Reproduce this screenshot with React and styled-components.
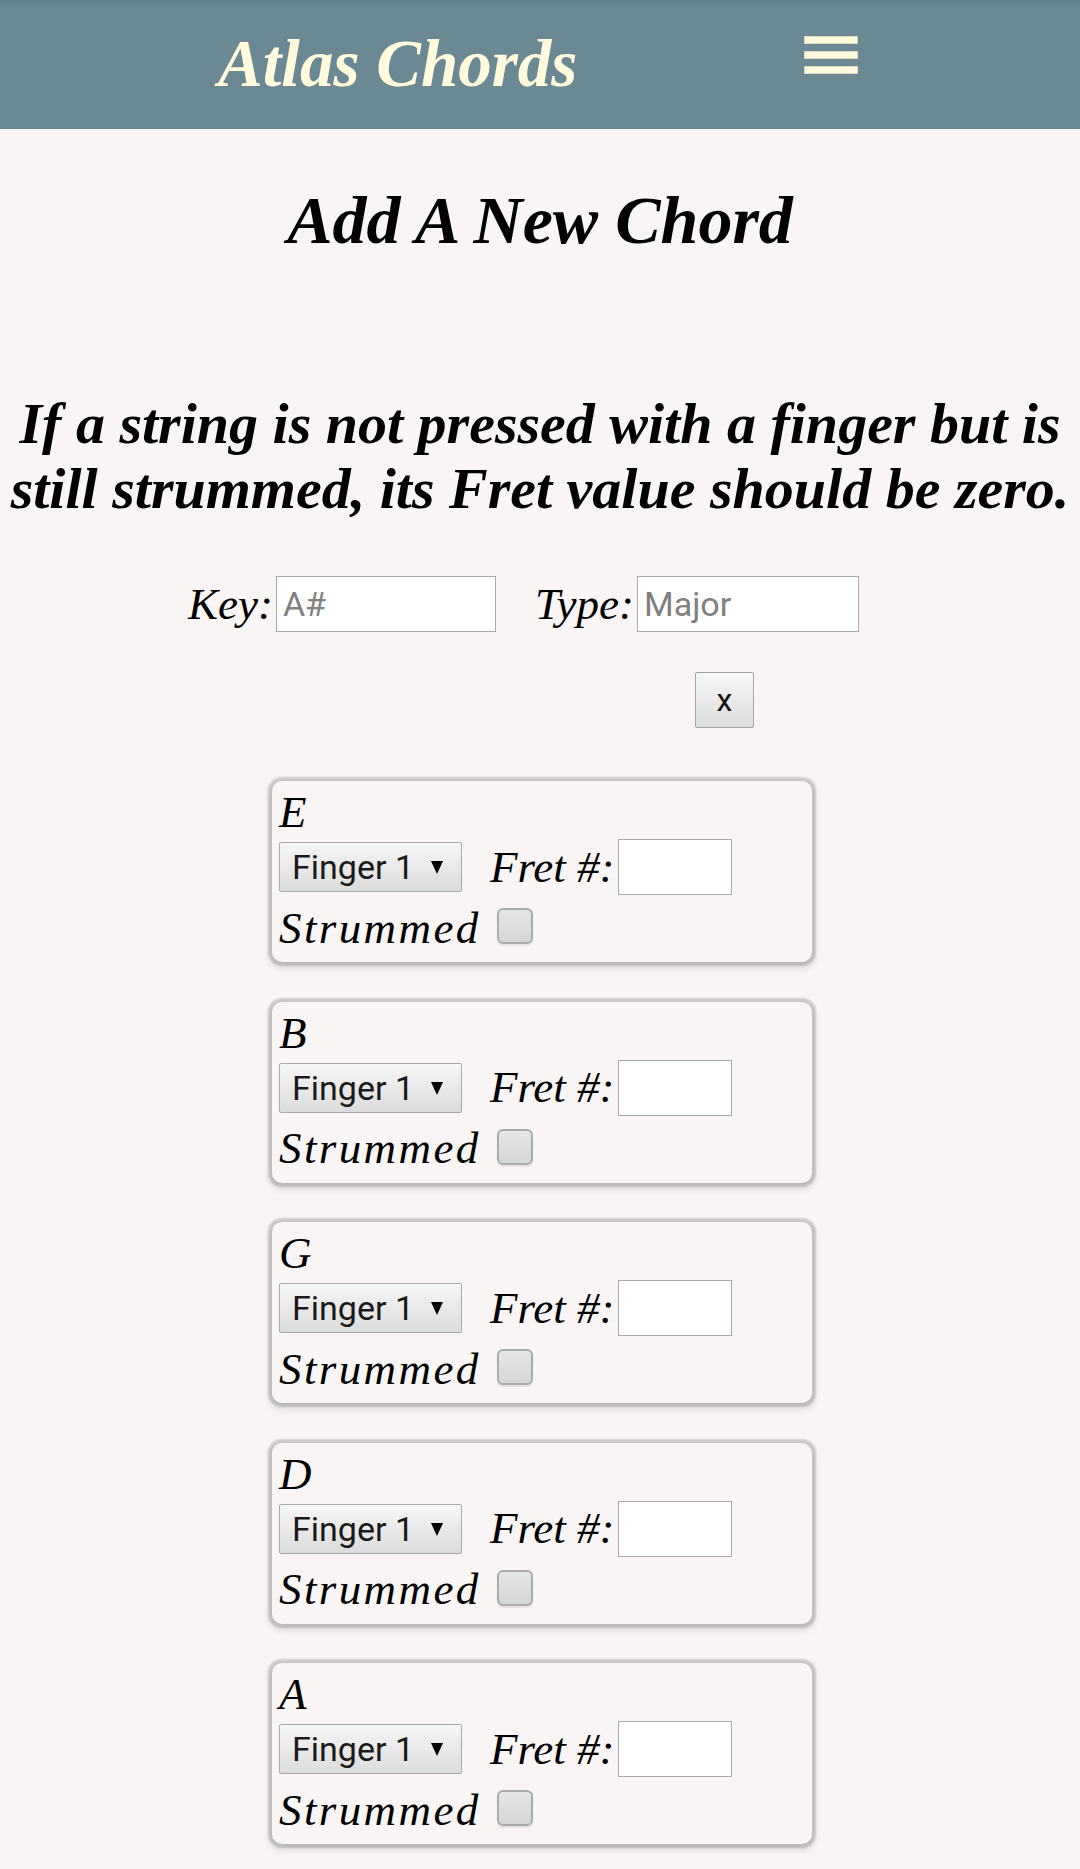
import React from "react";
import styled, { createGlobalStyle } from "styled-components";

const GlobalStyle = createGlobalStyle`
  * {
    box-sizing: border-box;
  }

  body {
    margin: 0;
    background: #f8f5f4;
    font-family: "Liberation Serif", "DejaVu Serif", serif;
    color: #000000;
  }
`;

const Header = styled.header`
  height: 129px;
  background: linear-gradient(#5f7c87 0px, #6a8994 6px, #6a8994 100%);
  display: flex;
  justify-content: space-between;
  align-items: flex-start;
  padding: 0 222px 0 218px;
`;

const Brand = styled.div`
  margin-top: 30px;
  font-family: "Liberation Serif", serif;
  font-style: italic;
  font-weight: 700;
  font-size: 67px;
  line-height: 1;
  color: #fffbdc;
`;

const MenuButton = styled.button`
  margin-top: 36px;
  padding: 0;
  background: none;
  border: none;
  display: flex;
  flex-direction: column;
  gap: 7px;
  cursor: pointer;
`;

const MenuBar = styled.span`
  display: block;
  width: 54px;
  height: 8px;
  background: #fffbdc;
  border: 1px solid #d9d8c2;
`;

const Main = styled.main`
  display: flex;
  flex-direction: column;
  align-items: center;
  padding-bottom: 40px;
`;

const PageTitle = styled.h1`
  margin: 57px 0 0;
  font-style: italic;
  font-weight: 700;
  font-size: 68px;
  line-height: 1;
  text-align: center;
`;

const Note = styled.p`
  margin: 137px 0 0;
  padding: 0 6px;
  width: 100%;
  font-style: italic;
  font-weight: 700;
  font-size: 58px;
  line-height: 65px;
  text-align: center;
`;

const KeyRow = styled.div`
  margin-top: 55px;
  width: 100%;
  display: flex;
  justify-content: center;
  align-items: center;
  padding-right: 33px;
`;

const FieldLabel = styled.label`
  font-style: italic;
  font-size: 45px;
  line-height: 1;
  margin-left: ${(props) => props.$offset || 0}px;
  margin-right: 3px;
  letter-spacing: ${(props) => props.$spread || 0}px;
`;

const TextInput = styled.input`
  width: ${(props) => props.$width}px;
  height: 56px;
  padding: 0 6px;
  background: #ffffff;
  border: 1px solid #a9a9a9;
  border-radius: 0;
  font-family: Roboto, "Liberation Sans", sans-serif;
  font-size: 34px;
  color: #222222;
  outline: none;

  &::placeholder {
    color: #808080;
  }
`;

const ButtonRow = styled.div`
  margin-top: 40px;
  width: 100%;
  display: flex;
  justify-content: flex-end;
  padding-right: 326px;
`;

const CloseButton = styled.button`
  width: 59px;
  height: 56px;
  padding: 0;
  background: linear-gradient(#f6f6f6, #dddddd);
  border: 1px solid #a6a6a6;
  border-radius: 2px;
  font-family: Roboto, "Liberation Sans", sans-serif;
  font-size: 32px;
  color: #111111;
  cursor: pointer;
`;

const CardList = styled.div`
  margin-top: 53px;
  padding-left: 4px;
  display: flex;
  flex-direction: column;
  gap: 39.5px;
`;

const StringCard = styled.section`
  width: 540px;
  padding: 6px 7px 1px;
  background: #f8f5f4;
  border-radius: 10px;
  box-shadow: 0 0 2px 4px rgba(0, 0, 0, 0.16), 0 4px 7px 3px rgba(0, 0, 0, 0.1);
`;

const StringName = styled.div`
  font-style: italic;
  font-size: 45px;
  line-height: 50px;
`;

const FingerRow = styled.div`
  margin-top: 2px;
  height: 56px;
  display: flex;
  align-items: center;
`;

const SelectWrap = styled.div`
  position: relative;
  width: 183px;
  height: 50px;
`;

const FingerSelect = styled.select`
  width: 100%;
  height: 100%;
  appearance: none;
  -webkit-appearance: none;
  padding: 0 0 0 12px;
  background: linear-gradient(#f6f6f6, #dcdcdc);
  border: 1px solid #a9a9a9;
  border-radius: 2px;
  font-family: Roboto, "Liberation Sans", sans-serif;
  font-size: 34px;
  color: #1a1a1a;
  outline: none;
`;

const SelectArrow = styled.svg`
  position: absolute;
  right: 18px;
  top: 18px;
  width: 14px;
  height: 14px;
  pointer-events: none;
`;

const StrumRow = styled.div`
  height: 66px;
  display: flex;
  align-items: center;
`;

const StrumBox = styled.input`
  appearance: none;
  -webkit-appearance: none;
  margin: 0 0 4px 13px;
  width: 36px;
  height: 36px;
  background: linear-gradient(#e6e6e6, #d6d6d6);
  border: 2px solid #ababab;
  border-radius: 6px;
  box-shadow: 0 2px 1px rgba(0, 0, 0, 0.08);
`;

const strings = ["E", "B", "G", "D", "A"];

const StringEntry = ({ name }) => (
  <StringCard>
    <StringName>{name}</StringName>
    <FingerRow>
      <SelectWrap>
        <FingerSelect defaultValue="1">
          <option value="1">Finger 1</option>
          <option value="2">Finger 2</option>
          <option value="3">Finger 3</option>
          <option value="4">Finger 4</option>
        </FingerSelect>
        <SelectArrow viewBox="0 0 14 14">
          <polygon points="1,1 13,1 7,14" fill="#000000" />
        </SelectArrow>
      </SelectWrap>
      <FieldLabel $offset={28}>Fret #:</FieldLabel>
      <TextInput $width={114} type="text" />
    </FingerRow>
    <StrumRow>
      <FieldLabel $spread={2.4}>Strummed</FieldLabel>
      <StrumBox type="checkbox" />
    </StrumRow>
  </StringCard>
);

const App = () => {
  return (
    <>
      <GlobalStyle />
      <Header>
        <Brand>Atlas Chords</Brand>
        <MenuButton aria-label="Menu">
          <MenuBar />
          <MenuBar />
          <MenuBar />
        </MenuButton>
      </Header>
      <Main>
        <PageTitle>Add A New Chord</PageTitle>
        <Note>
          If a string is not pressed with a finger but is still strummed, its
          Fret value should be zero.
        </Note>
        <KeyRow>
          <FieldLabel>Key:</FieldLabel>
          <TextInput $width={220} type="text" placeholder="A#" />
          <FieldLabel $offset={39}>Type:</FieldLabel>
          <TextInput $width={222} type="text" placeholder="Major" />
        </KeyRow>
        <ButtonRow>
          <CloseButton>x</CloseButton>
        </ButtonRow>
        <CardList>
          {strings.map((s) => (
            <StringEntry key={s} name={s} />
          ))}
        </CardList>
      </Main>
    </>
  );
};

export default App;
